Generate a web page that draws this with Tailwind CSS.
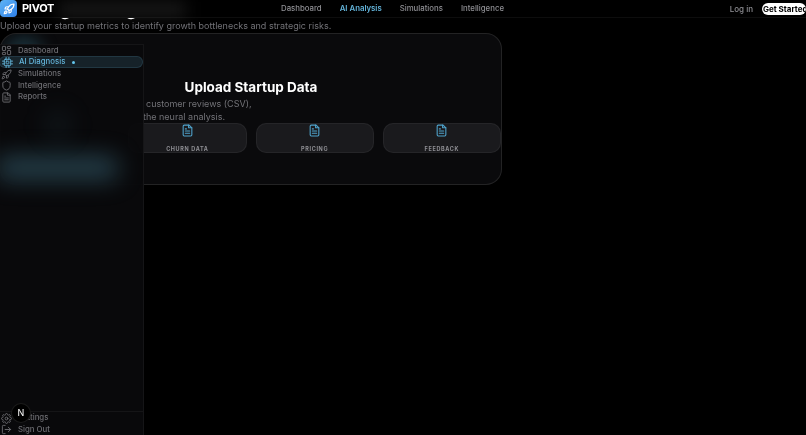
<!DOCTYPE html>
<html lang="en">
  <head>
    <meta charset="UTF-8" />
    <meta name="viewport" content="width=device-width, initial-scale=1.0" />
    <script src="https://cdn.jsdelivr.net/npm/@tailwindcss/browser@4"></script>
    <title>Pivot</title>
  </head>
  <body class="bg-black font-['Inter',sans-serif] h-[435px] w-[806px] overflow-hidden">
   <div class="relative h-[435px] w-[806px] overflow-hidden blur-[0.35px]">
    <!-- top nav -->
    <header class="absolute top-0 left-0 w-[806px] h-[18px] flex items-center bg-black border-b border-white/5 z-20">
      <div class="absolute left-[58px] top-[2px] w-[128px] h-[15px] bg-white/10 blur-sm"></div>
      <div class="relative flex items-center gap-[5px] w-[281px]">
        <div class="w-[17px] h-[17px] rounded-[4px] bg-gradient-to-br from-[#5fb4f5] to-[#2f7fe8] flex items-center justify-center">
          <svg class="w-[12px] h-[12px]" viewBox="0 0 24 24" fill="none" stroke="white" stroke-width="2.4" stroke-linecap="round" stroke-linejoin="round"><path d="M4.5 16.5c-1.5 1.26-2 5-2 5s3.74-.5 5-2c.71-.84.7-2.13-.09-2.91a2.18 2.18 0 0 0-2.91-.09z"/><path d="m12 15-3-3a22 22 0 0 1 2-3.95A12.88 12.88 0 0 1 22 2c0 2.72-.78 7.5-6 11a22.35 22.35 0 0 1-4 2z"/><path d="M9 12H4s.55-3.03 2-4c1.62-1.08 5 0 5 0"/><path d="M12 15v5s3.03-.55 4-2c1.08-1.62 0-5 0-5"/></svg>
        </div>
        <span class="text-white font-bold text-[11px] tracking-tight">PIVOT</span>
      </div>
      <nav class="relative flex gap-[18px] text-[7.8px] font-medium text-[#8f8f94]">
        <a>Dashboard</a>
        <a class="text-[#63b3d9] font-semibold">AI Analysis</a>
        <a>Simulations</a>
        <a>Intelligence</a>
      </nav>
      <div class="relative ml-auto flex items-center gap-[9px] text-[8px] font-medium">
        <a class="text-[#8f8f94]">Log in</a>
        <a class="bg-white text-black font-bold rounded-full h-[12px] w-[44px] pl-[1px] leading-[12px] whitespace-nowrap overflow-hidden">Get Started</a>
      </div>
    </header>

    <!-- sidebar -->
    <aside class="absolute left-0 top-[44px] w-[144px] h-[391px] bg-[#0a0a0c]/95 border-r border-t border-white/5 z-10 flex flex-col overflow-hidden text-[7.8px] font-medium text-[#6d6d72]">
      <div class="absolute left-[-4px] top-[112px] w-[122px] h-[22px] rounded-lg bg-[#4d8fa6]/45 blur-md"></div>
      <div class="absolute left-[45px] top-[65px] w-[26px] h-[30px] rounded-full bg-[#4d8fa6]/10 blur-md"></div>
      <ul class="relative flex flex-col">
        <li class="flex items-center h-[11px] pl-[1px] gap-[6px]">
          <svg class="w-[11px] h-[11px]" viewBox="0 0 24 24" fill="none" stroke="currentColor" stroke-width="2"><rect x="3" y="3" width="7" height="9" rx="1"/><rect x="14" y="3" width="7" height="5" rx="1"/><rect x="14" y="12" width="7" height="9" rx="1"/><rect x="3" y="16" width="7" height="5" rx="1"/></svg>
          Dashboard
        </li>
        <li class="flex items-center h-[12px] pl-[1px] gap-[6px] text-[#63b3d9] bg-[#63b3d9]/15 border border-[#63b3d9]/15 rounded-full -ml-[1px] box-border">
          <svg class="w-[11px] h-[11px] ml-[1px]" viewBox="0 0 24 24" fill="none" stroke="currentColor" stroke-width="2" stroke-linecap="round"><rect x="5" y="5" width="14" height="14" rx="2"/><rect x="9" y="9" width="6" height="6" rx="1"/><path d="M9 1v4M15 1v4M9 19v4M15 19v4M1 9h4M1 15h4M19 9h4M19 15h4"/></svg>
          AI Diagnosis
          <span class="w-[3px] h-[3px] rounded-full bg-[#63c6ee] ml-[1px]"></span>
        </li>
        <li class="flex items-center h-[12px] pl-[1px] gap-[6px]">
          <svg class="w-[11px] h-[11px]" viewBox="0 0 24 24" fill="none" stroke="currentColor" stroke-width="2" stroke-linecap="round" stroke-linejoin="round"><path d="M4.5 16.5c-1.5 1.26-2 5-2 5s3.74-.5 5-2c.71-.84.7-2.13-.09-2.91a2.18 2.18 0 0 0-2.91-.09z"/><path d="m12 15-3-3a22 22 0 0 1 2-3.95A12.88 12.88 0 0 1 22 2c0 2.72-.78 7.5-6 11a22.35 22.35 0 0 1-4 2z"/><path d="M9 12H4s.55-3.03 2-4c1.62-1.08 5 0 5 0"/><path d="M12 15v5s3.03-.55 4-2c1.08-1.62 0-5 0-5"/></svg>
          Simulations
        </li>
        <li class="flex items-center h-[11.5px] pl-[1px] gap-[6px]">
          <svg class="w-[11px] h-[11px]" viewBox="0 0 24 24" fill="none" stroke="currentColor" stroke-width="2" stroke-linecap="round" stroke-linejoin="round"><path d="M20 13c0 5-3.5 7.5-7.66 8.95a1 1 0 0 1-.67-.01C7.5 20.5 4 18 4 13V6a1 1 0 0 1 1-1c2 0 4.5-1.2 6.24-2.72a1.17 1.17 0 0 1 1.52 0C14.51 3.81 17 5 19 5a1 1 0 0 1 1 1z"/></svg>
          Intelligence
        </li>
        <li class="flex items-center h-[11px] pl-[1px] gap-[6px]">
          <svg class="w-[11px] h-[11px]" viewBox="0 0 24 24" fill="none" stroke="currentColor" stroke-width="2" stroke-linecap="round" stroke-linejoin="round"><path d="M15 2H6a2 2 0 0 0-2 2v16a2 2 0 0 0 2 2h12a2 2 0 0 0 2-2V7z"/><path d="M14 2v5h6M16 13H8M16 17H8M10 9H8"/></svg>
          Reports
        </li>
      </ul>
      <ul class="relative mt-auto border-t border-white/5 pt-[1px] flex flex-col">
        <li class="flex items-center h-[11.5px] pl-[1px] gap-[6px]">
          <svg class="w-[11px] h-[11px]" viewBox="0 0 24 24" fill="none" stroke="currentColor" stroke-width="2" stroke-linecap="round" stroke-linejoin="round"><circle cx="12" cy="12" r="3"/><path d="M19.4 15a1.65 1.65 0 0 0 .33 1.82l.06.06a2 2 0 1 1-2.83 2.83l-.06-.06a1.65 1.65 0 0 0-2.82 1.17V21a2 2 0 0 1-4 0v-.09A1.65 1.65 0 0 0 7.2 19.7l-.06.06a2 2 0 1 1-2.83-2.83l.06-.06a1.65 1.65 0 0 0-1.17-2.82H3a2 2 0 0 1 0-4h.09A1.65 1.65 0 0 0 4.3 7.2l-.06-.06a2 2 0 1 1 2.83-2.83l.06.06A1.65 1.65 0 0 0 10 3.2V3a2 2 0 0 1 4 0v.09a1.65 1.65 0 0 0 2.82 1.17l.06-.06a2 2 0 1 1 2.83 2.83l-.06.06A1.65 1.65 0 0 0 20.8 10H21a2 2 0 0 1 0 4h-.09a1.65 1.65 0 0 0-1.51 1z"/></svg>
          Settings
        </li>
        <li class="flex items-center h-[11px] pl-[1px] gap-[6px]">
          <svg class="w-[11px] h-[11px]" viewBox="0 0 24 24" fill="none" stroke="currentColor" stroke-width="2" stroke-linecap="round" stroke-linejoin="round"><path d="M9 21H5a2 2 0 0 1-2-2V5a2 2 0 0 1 2-2h4"/><path d="m16 17 5-5-5-5M21 12H9"/></svg>
          Sign Out
        </li>
      </ul>
    </aside>

    <!-- dev badge -->
    <div class="absolute left-[11px] top-[403px] w-[20px] h-[20px] rounded-full bg-black border border-white/10 z-30 flex items-center justify-center text-white text-[9px] font-normal">N</div>

    <main class="w-[502px]">
      <h1 class="text-white font-bold text-[20px] leading-[24px] -mt-[4px]">Strategic Diagnosis</h1>
      <p class="text-[#727277] text-[9px] leading-[14px] -mt-[1px] whitespace-nowrap">Upload your startup metrics to identify growth bottlenecks and strategic risks.</p>

      <section class="relative mt-0 h-[152px] rounded-[16px] border border-white/10 bg-[#0a0a0c] overflow-hidden">
        <div class="absolute left-[3px] top-[2px] w-[40px] h-[40px] rounded-full bg-[#3f8ba6]/30 blur-sm"></div>
        <h2 class="text-white font-bold text-[13.5px] leading-[18px] text-center mt-[44px]">Upload Startup Data</h2>
        <p class="text-[#727277] text-[9px] leading-[13px] mt-[1px] whitespace-nowrap">
          <span class="block pl-[145px]">customer reviews (CSV),</span>
          <span class="block pl-[142px]">the neural analysis.</span>
        </p>
        <div class="grid grid-cols-4 gap-[9px] mt-0">
          <div class="h-[30px]"></div>
          <div class="h-[30px] rounded-[10px] border border-white/5 bg-[#1a1a1d] flex flex-col items-center">
            <svg class="w-[13px] h-[13px] text-[#4fa3cc]" viewBox="0 0 24 24" fill="none" stroke="currentColor" stroke-width="2" stroke-linecap="round" stroke-linejoin="round"><path d="M15 2H6a2 2 0 0 0-2 2v16a2 2 0 0 0 2 2h12a2 2 0 0 0 2-2V7z"/><path d="M14 2v5h6M16 13H8M16 17H8M10 9H8"/></svg>
            <span class="mt-[8.5px] text-[5.5px] leading-[6px] font-bold tracking-[0.65px] text-[#8f8f94]">CHURN DATA</span>
          </div>
          <div class="h-[30px] rounded-[10px] border border-white/5 bg-[#1a1a1d] flex flex-col items-center">
            <svg class="w-[13px] h-[13px] text-[#4fa3cc]" viewBox="0 0 24 24" fill="none" stroke="currentColor" stroke-width="2" stroke-linecap="round" stroke-linejoin="round"><path d="M15 2H6a2 2 0 0 0-2 2v16a2 2 0 0 0 2 2h12a2 2 0 0 0 2-2V7z"/><path d="M14 2v5h6M16 13H8M16 17H8M10 9H8"/></svg>
            <span class="mt-[8.5px] text-[5.5px] leading-[6px] font-bold tracking-[0.65px] text-[#8f8f94]">PRICING</span>
          </div>
          <div class="h-[30px] rounded-[10px] border border-white/5 bg-[#1a1a1d] flex flex-col items-center">
            <svg class="w-[13px] h-[13px] text-[#4fa3cc]" viewBox="0 0 24 24" fill="none" stroke="currentColor" stroke-width="2" stroke-linecap="round" stroke-linejoin="round"><path d="M15 2H6a2 2 0 0 0-2 2v16a2 2 0 0 0 2 2h12a2 2 0 0 0 2-2V7z"/><path d="M14 2v5h6M16 13H8M16 17H8M10 9H8"/></svg>
            <span class="mt-[8.5px] text-[5.5px] leading-[6px] font-bold tracking-[0.65px] text-[#8f8f94]">FEEDBACK</span>
          </div>
        </div>
      </section>
    </main>
   </div>
  </body>
</html>
